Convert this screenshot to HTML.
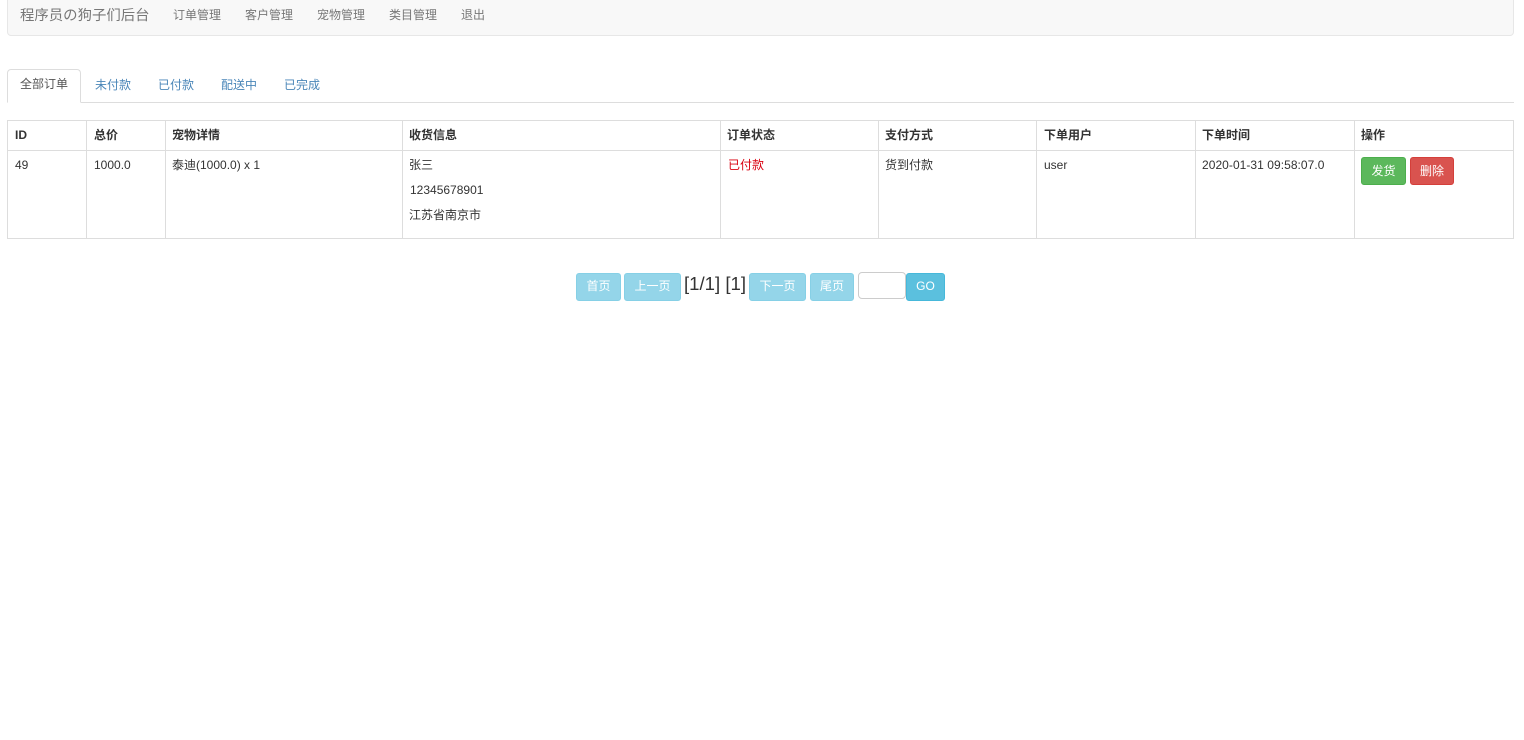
<!DOCTYPE html>
<html lang="zh">
<head>
<meta charset="utf-8">
<title>订单管理</title>
<style>
html,body{margin:0;padding:0;background:#fff;width:1524px;height:740px;overflow:hidden}
body{position:relative;font-family:"Liberation Sans","Noto Sans CJK SC",sans-serif;font-size:12px;color:#333}
.a{position:absolute;white-space:nowrap;line-height:16px}
.box{position:absolute;box-sizing:border-box}
.nav{color:#777}
.tab{color:#4a86b8}
.th{font-weight:bold;color:#333}
.line{position:absolute;background:#ddd}
.btn{position:absolute;box-sizing:border-box;height:28px;border-radius:3px;color:#fff;text-align:center;line-height:26px;font-size:12px;border:1px solid}
.pg{line-height:24px}
.info{background:#5bc0de;border-color:#46b8da}
.dis{opacity:.65}
</style>
</head>
<body>
<div class="box" style="left:7px;top:-20px;width:1507px;height:56px;background:#f8f8f8;border:1px solid #e7e7e7;border-radius:4px"></div>
<span class="a nav" style="left:20px;top:8px;font-size:14.4px">程序员の狗子们后台</span>
<span class="a nav" style="left:173px;top:7px">订单管理</span>
<span class="a nav" style="left:245px;top:7px">客户管理</span>
<span class="a nav" style="left:317px;top:7px">宠物管理</span>
<span class="a nav" style="left:389px;top:7px">类目管理</span>
<span class="a nav" style="left:461px;top:7px">退出</span>

<div class="line" style="left:7px;top:102px;width:1507px;height:1px"></div>
<div class="box" style="left:7px;top:69px;width:74px;height:34px;background:#fff;border:1px solid #ddd;border-bottom-color:#fff;border-radius:4px 4px 0 0"></div>
<span class="a" style="left:20px;top:76px;color:#555">全部订单</span>
<span class="a tab" style="left:95px;top:77px">未付款</span>
<span class="a tab" style="left:158px;top:77px">已付款</span>
<span class="a tab" style="left:221px;top:77px">配送中</span>
<span class="a tab" style="left:284px;top:77px">已完成</span>

<div class="line" style="left:7px;top:120px;width:1507px;height:1px"></div>
<div class="line" style="left:7px;top:150px;width:1507px;height:1px"></div>
<div class="line" style="left:7px;top:238px;width:1507px;height:1px"></div>
<div class="line" style="left:7px;top:120px;width:1px;height:119px"></div>
<div class="line" style="left:86px;top:120px;width:1px;height:119px"></div>
<div class="line" style="left:165px;top:120px;width:1px;height:119px"></div>
<div class="line" style="left:402px;top:120px;width:1px;height:119px"></div>
<div class="line" style="left:720px;top:120px;width:1px;height:119px"></div>
<div class="line" style="left:878px;top:120px;width:1px;height:119px"></div>
<div class="line" style="left:1036px;top:120px;width:1px;height:119px"></div>
<div class="line" style="left:1195px;top:120px;width:1px;height:119px"></div>
<div class="line" style="left:1354px;top:120px;width:1px;height:119px"></div>
<div class="line" style="left:1513px;top:120px;width:1px;height:119px"></div>

<span class="a th" style="left:15px;top:127px">ID</span>
<span class="a th" style="left:94px;top:127px">总价</span>
<span class="a th" style="left:172px;top:127px">宠物详情</span>
<span class="a th" style="left:409px;top:127px">收货信息</span>
<span class="a th" style="left:727px;top:127px">订单状态</span>
<span class="a th" style="left:885px;top:127px">支付方式</span>
<span class="a th" style="left:1044px;top:127px">下单用户</span>
<span class="a th" style="left:1202px;top:127px">下单时间</span>
<span class="a th" style="left:1361px;top:127px">操作</span>

<span class="a" style="left:15px;top:157px">49</span>
<span class="a" style="left:94px;top:157px">1000.0</span>
<span class="a" style="left:172px;top:157px">泰迪(1000.0) x 1</span>
<span class="a" style="left:409px;top:157px">张三</span>
<span class="a" style="left:410px;top:182px">12345678901</span>
<span class="a" style="left:409px;top:207px">江苏省南京市</span>
<span class="a" style="left:728px;top:157px;color:#d9000f">已付款</span>
<span class="a" style="left:885px;top:157px">货到付款</span>
<span class="a" style="left:1044px;top:157px">user</span>
<span class="a" style="left:1202px;top:157px;letter-spacing:.05px">2020-01-31 09:58:07.0</span>
<div class="btn" style="left:1361px;top:157px;width:45px;background:#5cb85c;border-color:#4cae4c">发货</div>
<div class="btn" style="left:1410px;top:157px;width:44px;background:#d9534f;border-color:#d43f3a">删除</div>

<div class="btn pg info dis" style="left:576px;top:273px;width:45px">首页</div>
<div class="btn pg info dis" style="left:624px;top:273px;width:57px">上一页</div>
<span class="a" style="left:684px;top:273px;font-size:18.6px;line-height:22px">[1/1] [1]</span>
<div class="btn pg info dis" style="left:749px;top:273px;width:57px">下一页</div>
<div class="btn pg info dis" style="left:810px;top:273px;width:44px">尾页</div>
<div class="box" style="left:858px;top:272px;width:48px;height:27px;background:#fff;border:1px solid #ccc;border-radius:4px"></div>
<div class="btn pg info" style="left:906px;top:273px;width:39px">GO</div>
</body>
</html>
